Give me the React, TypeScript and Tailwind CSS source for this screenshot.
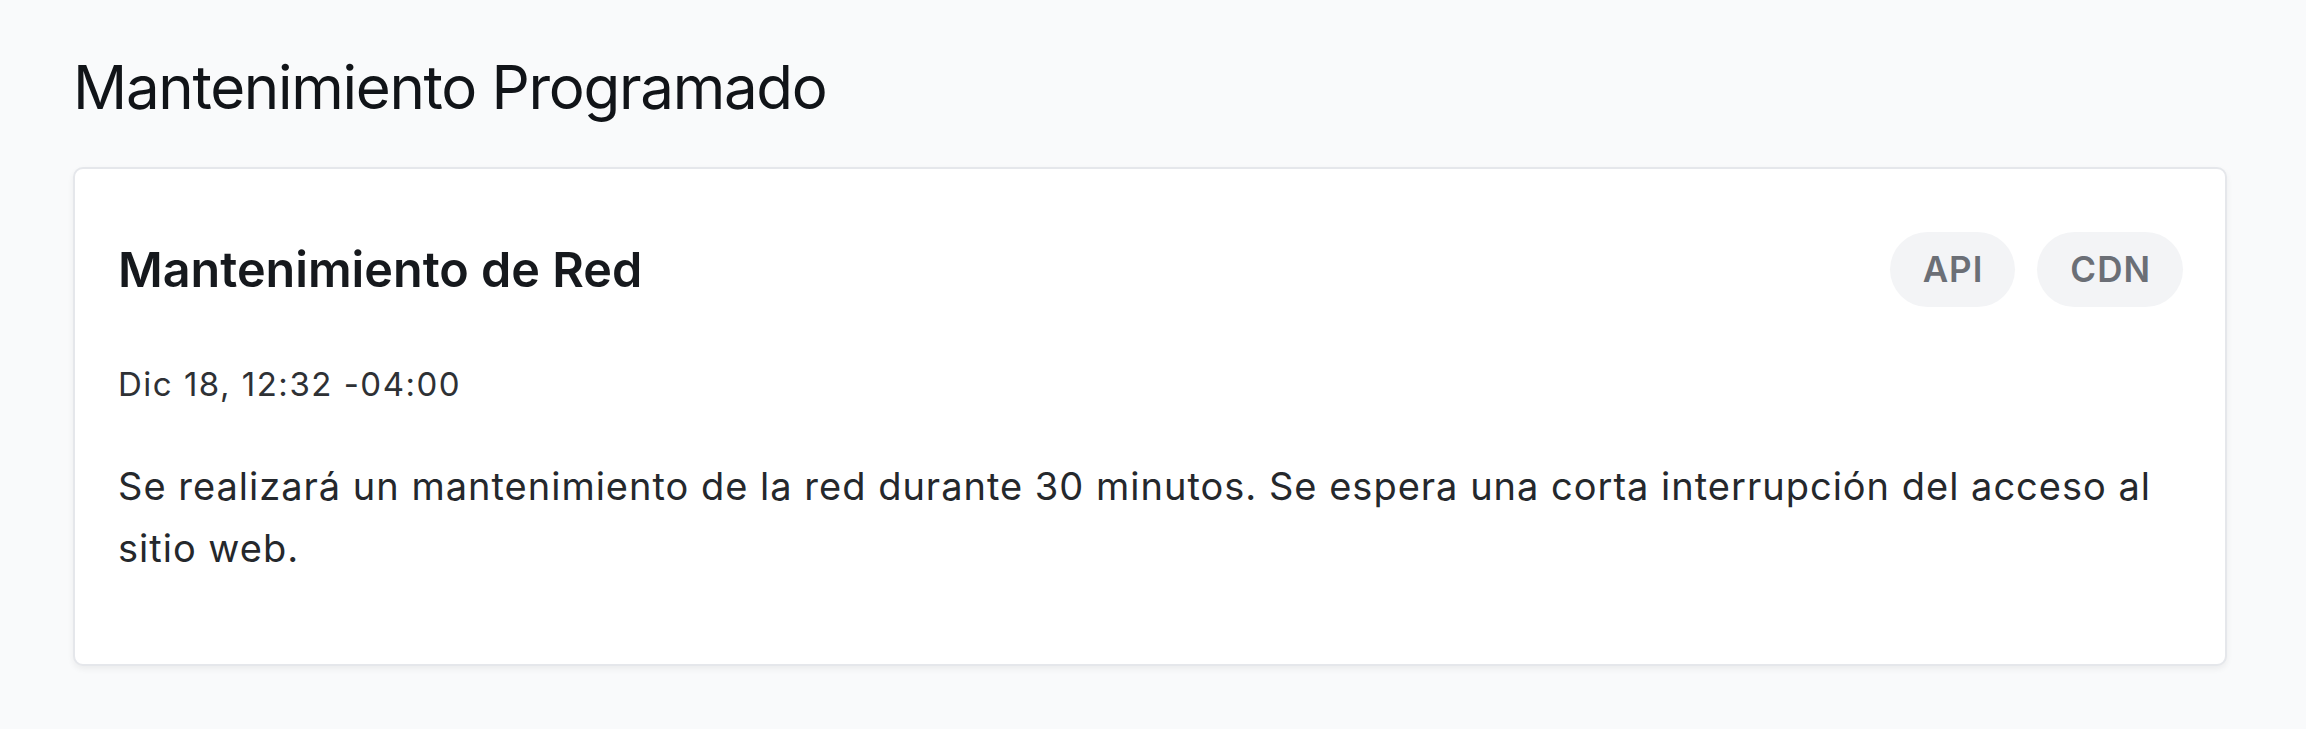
import React from "react";

export default function App() {
  return (
    <div className="min-h-[729px] w-full bg-[#f9fafb] pl-[73px] pr-[79px] pt-[51px] pb-[60px] font-['Inter',sans-serif]">
      <h1 className="text-[60px] leading-[72px] font-normal text-[#111418] tracking-[-1.3px]">
        Mantenimiento Programado
      </h1>
      <div className="mt-[44px] rounded-[10px] border-2 border-[#e5e7eb] bg-white shadow-[0_3px_6px_rgba(0,0,0,0.06)] pl-[43px] pr-[42px] pt-[63px] pb-[85px]">
        <div className="flex items-center justify-between">
          <h2 className="text-[48.5px] leading-[60px] font-semibold text-[#16191d]">
            Mantenimiento de Red
          </h2>
          <div className="flex items-center gap-[22px]">
            <span className="flex h-[75px] items-center rounded-full bg-[#f3f4f6] pl-[33px] pr-[32px] text-[35px] font-semibold tracking-[1px] text-[#6b6f76]">
              API
            </span>
            <span className="flex h-[75px] items-center rounded-full bg-[#f3f4f6] pl-[33px] pr-[32px] text-[35px] font-semibold tracking-[1px] text-[#6b6f76]">
              CDN
            </span>
          </div>
        </div>
        <p className="mt-[55px] text-[33px] leading-[44px] tracking-[1.5px] text-[#2e3135]">
          Dic 18, 12:32 -04:00
        </p>
        <p className="mt-[49px] text-[38px] leading-[62px] tracking-[1px] text-[#25282c]">
          Se realizará un mantenimiento de la red durante 30 minutos. Se espera una corta interrupción del acceso al sitio web.
        </p>
      </div>
    </div>
  );
}
